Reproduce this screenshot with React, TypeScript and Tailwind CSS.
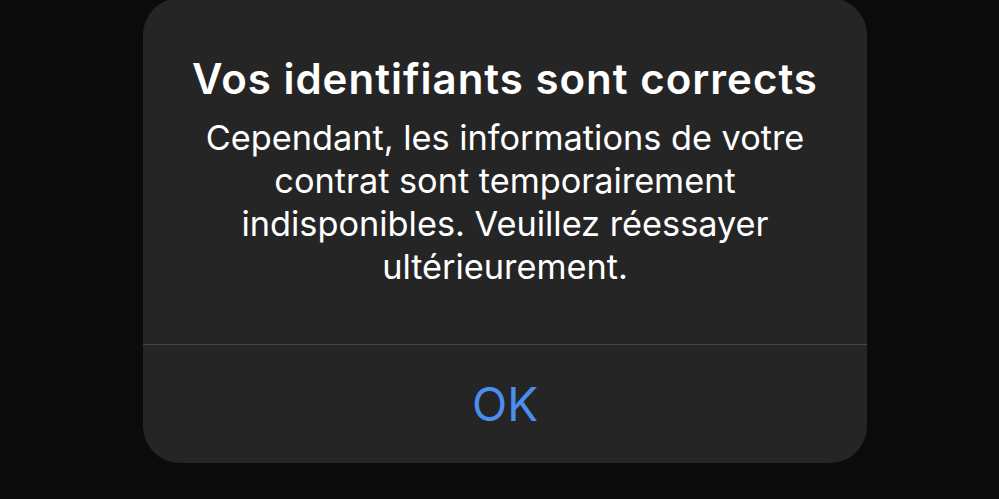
export default function App() {
  return (
    <div className="h-[499px] w-[999px] overflow-hidden bg-[#0b0b0b] font-['Inter',sans-serif]">
      <div className="ml-[143px] mt-[-2px] flex h-[465px] w-[724px] flex-col rounded-[37px] bg-[#252525]">
        <div className="flex h-[346px] flex-col items-center px-10 pt-[56px] text-center text-white">
          <h1 className="text-[42px] font-semibold leading-[50px] tracking-[1px]">Vos identifiants sont corrects</h1>
          <p className="mt-[12px] w-[620px] text-[34.3px] leading-[43px]">
            Cependant, les informations de votre contrat sont temporairement indisponibles. Veuillez réessayer
            ultérieurement.
          </p>
        </div>
        <div className="h-px bg-[#474747]" />
        <button className="flex flex-1 items-center justify-center text-[46px] text-[#4b8ef0]">OK</button>
      </div>
    </div>
  );
}
